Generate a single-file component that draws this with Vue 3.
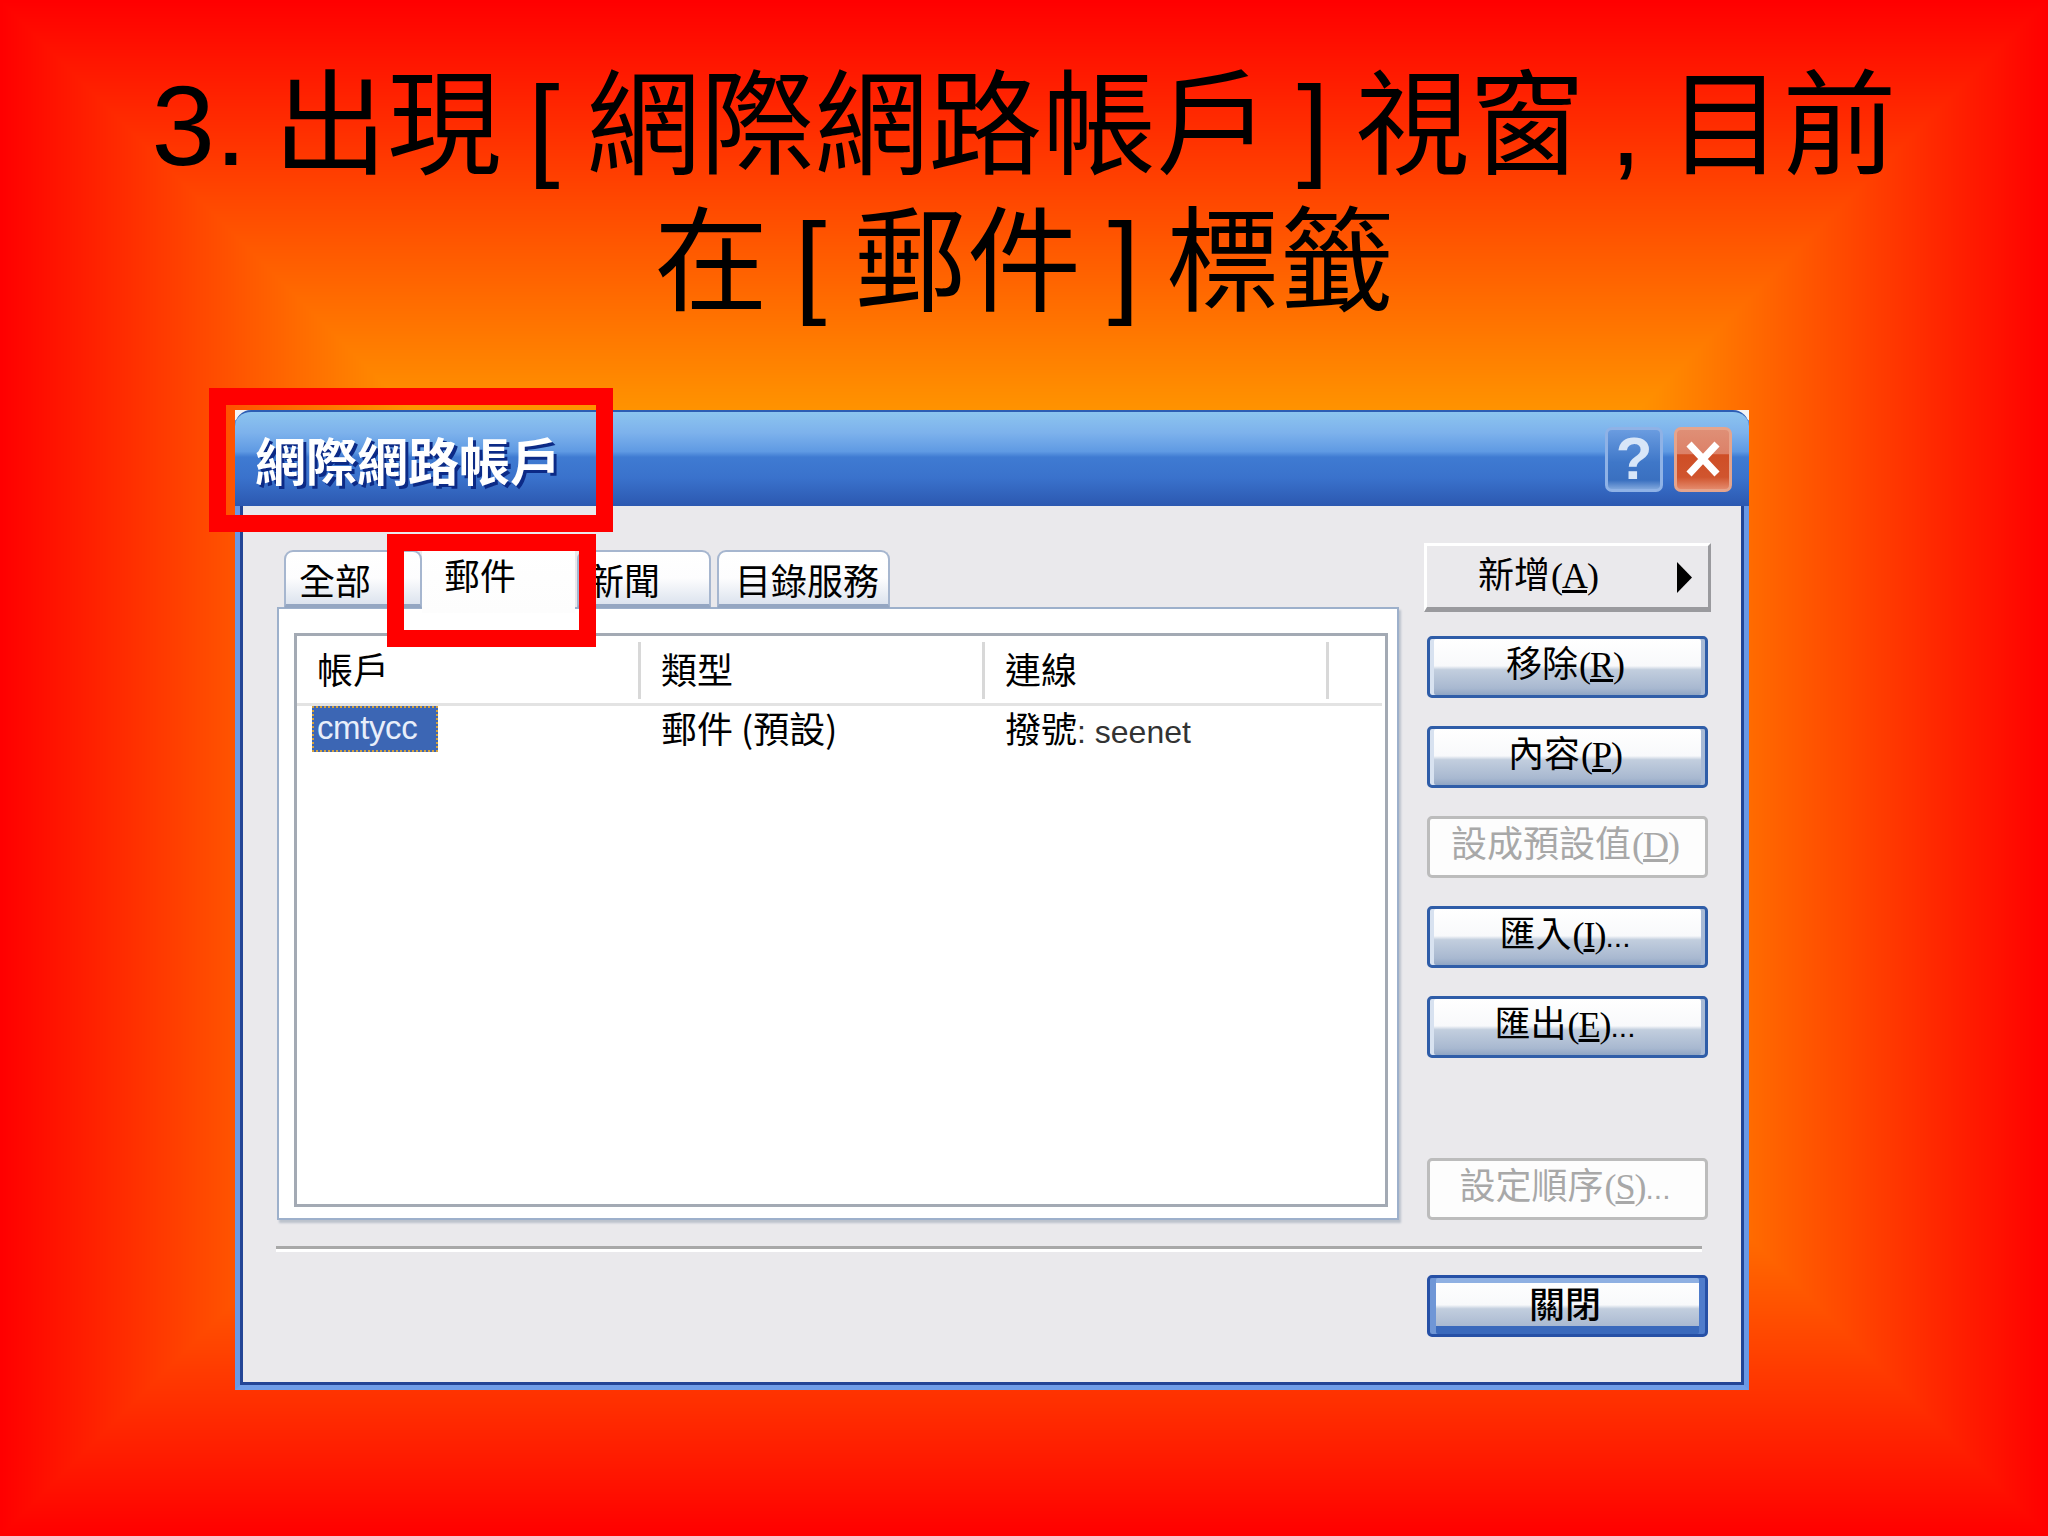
<script setup>
const levels = Array.from({ length: 256 }, (_, i) => {
  const d = i * 2.78
  return {
    x: d,
    y: d,
    w: 2048 - 2 * d,
    h: 1536 - 2 * d,
    fill: `rgb(255,${i},0)`
  }
}).filter((l) => l.h > 0)
const tabs = [
  { label: '全部', cls: 'tab-all' },
  { label: '郵件', cls: 'tab-mail' },
  { label: '新聞', cls: 'tab-news' },
  { label: '目錄服務', cls: 'tab-dir' }
]
const columns = ['帳戶', '類型', '連線']
const buttons = [
  { cjk: '移除', key: 'R', tail: '' },
  { cjk: '內容', key: 'P', tail: '' },
  { cjk: '設成預設值', key: 'D', tail: '', off: true },
  { cjk: '匯入', key: 'I', tail: '...' },
  { cjk: '匯出', key: 'E', tail: '...' }
]
</script>

<template>
  <div class="slide">
    <svg class="backdrop" width="2048" height="1536" viewBox="0 0 2048 1536" aria-hidden="true">
      <rect v-for="l in levels" :key="l.fill" :x="l.x" :y="l.y" :width="l.w" :height="l.h" :fill="l.fill" shape-rendering="crispEdges" />
    </svg>

    <h1 class="heading">
      <span class="line">3. 出現 [ 網際網路帳戶 ] 視窗 , 目前</span>
      <span class="line">在 [ 郵件 ] 標籤</span>
    </h1>

    <section class="dialog">
      <i class="notch notch-l"></i>
      <i class="notch notch-r"></i>
      <header class="titlebar">
        <span class="title-text">網際網路帳戶</span>
        <div class="title-btns">
          <span class="help">?</span>
          <span class="close">
            <svg width="34" height="36" viewBox="0 0 34 36"><path d="M3 3 L31 33 M31 3 L3 33" stroke="#fff" stroke-width="7" fill="none" /></svg>
          </span>
        </div>
      </header>

      <div class="client">
        <div class="main-row">
          <div class="left">
            <div class="tabs">
              <div v-for="t in tabs" :key="t.label" class="tab" :class="t.cls">{{ t.label }}</div>
            </div>
            <div class="panel">
              <div class="list">
                <div class="list-head">
                  <div v-for="c in columns" :key="c" class="col-head">{{ c }}</div>
                </div>
                <div class="list-row">
                  <div class="cell cell-first"><span class="selected">cmtycc</span></div>
                  <div class="cell">郵件 (預設)</div>
                  <div class="cell">撥號<span class="latin">: seenet</span></div>
                </div>
              </div>
            </div>
          </div>

          <div class="right">
            <div class="btn-new">
              <span class="btn-new-label">新增<span class="key">(<u>A</u>)</span></span>
              <svg class="arrow" width="15" height="31" viewBox="0 0 15 31"><path d="M0 0 L15 15.5 L0 31 Z" fill="#000" /></svg>
            </div>
            <div v-for="b in buttons" :key="b.key" class="btn" :class="{ off: b.off }">
              <span>{{ b.cjk }}<span class="key">(<u>{{ b.key }}</u>)</span><span class="tail">{{ b.tail }}</span></span>
            </div>
            <div class="btn off btn-order"><span>設定順序<span class="key">(<u>S</u>)</span><span class="tail">...</span></span></div>
          </div>
        </div>

        <div class="separator"></div>
        <div class="footer">
          <div class="btn btn-default"><span>關閉</span></div>
        </div>
      </div>
    </section>

    <div class="mark mark-title"></div>
    <div class="mark mark-tab"></div>
  </div>
</template>

<style scoped>
.slide {
  position: relative;
  width: 2048px;
  height: 1536px;
  overflow: hidden;
  font-family: "Liberation Sans", "Noto Sans CJK TC", sans-serif;
  color: #000;
}
.backdrop {
  position: absolute;
  left: 0;
  top: 0;
}
.heading {
  position: relative;
  margin: 0;
  padding-top: 57px;
  height: 353px;
  box-sizing: border-box;
  font-size: 114px;
  font-weight: 400;
  line-height: 137px;
  text-align: center;
  white-space: nowrap;
  word-spacing: -5px;
}
.line {
  display: block;
}
.dialog {
  position: relative;
  margin-left: 235px;
  width: 1514px;
  height: 980px;
  box-sizing: border-box;
  border-left: 5px solid #6a98e4;
  border-right: 5px solid #6a98e4;
  border-bottom: 5px solid #6f9de8;
  background: #eae9ec;
  box-shadow: inset 0 -3px 0 #234596, inset 3px 0 0 #234596, inset -3px 0 0 #234596;
  margin-top: 57px;
}
.notch {
  position: absolute;
  top: 0;
  width: 10px;
  height: 10px;
  background: #f4f4f4;
}
.notch-l {
  left: -5px;
}
.notch-r {
  right: -5px;
}
.titlebar {
  position: relative;
  margin: 0 -5px;
  height: 96px;
  box-sizing: border-box;
  padding: 0 17px 0 20px;
  display: flex;
  align-items: center;
  justify-content: space-between;
  border-radius: 16px 16px 0 0;
  border-top: 2px solid #2c5db4;
  background: linear-gradient(#8cc4ef 0%, #7db2ec 22%, #5f9ae3 42%, #3f7bd2 48%, #3a72cc 70%, #2c58b0 100%);
}
.title-text {
  font-family: "Noto Sans CJK TC", sans-serif;
  font-size: 51px;
  font-weight: 700;
  line-height: 60px;
  color: #fff;
  text-shadow: 3px 3px 0 #0c2a86;
}
.title-btns {
  display: flex;
  gap: 11px;
}
.help,
.close {
  width: 58px;
  height: 65px;
  box-sizing: border-box;
  border-radius: 7px;
  display: flex;
  align-items: center;
  justify-content: center;
}
.help {
  border: 3px solid #8fb2e6;
  background: linear-gradient(#6a9ce0, #3f77c8 55%, #3a70c0 85%, #7fa6dc);
  color: #d8e6f8;
  font-size: 60px;
  line-height: 1;
  font-weight: 700;
}
.close {
  border: 3px solid #e5a48c;
  background: linear-gradient(#df8f76 0%, #dc8168 40%, #cf4e26 42%, #d0552e 80%, #e48a6c 100%);
}
.client {
  display: flex;
  flex-direction: column;
  height: 879px;
  padding-right: 36px;
  box-sizing: border-box;
}
.main-row {
  display: flex;
  padding-top: 37px;
  height: 715px;
  box-sizing: border-box;
}
.left {
  margin: 7px 0 0 37px;
  width: 1122px;
}
.tabs {
  position: relative;
  z-index: 1;
  height: 58px;
  margin-bottom: -1px;
  display: flex;
  align-items: flex-end;
  font-family: "Noto Sans CJK TC", sans-serif;
  font-size: 36px;
}
.tab {
  height: 58px;
  box-sizing: border-box;
  border: 2px solid #a6b6cf;
  border-bottom: 4px solid #94a6c2;
  border-radius: 9px 9px 0 0;
  background: linear-gradient(#fff 0%, #fdfdfe 50%, #dce3ee 100%);
  line-height: 54px;
  text-align: left;
}
.tab-all {
  margin-left: 7px;
  width: 138px;
  padding-left: 13px;
}
.tab-mail {
  width: 153px;
  height: 70px;
  margin-bottom: -5px;
  border: 0;
  background: linear-gradient(#fff 0%, #fdfdfd 100%);
  padding-left: 22px;
  line-height: 62px;
}
.tab-news {
  margin-left: 2px;
  width: 134px;
  padding-left: 9px;
}
.tab-dir {
  margin-left: 6px;
  width: 173px;
  padding-left: 16px;
}
.panel {
  height: 613px;
  box-sizing: border-box;
  background: #fff;
  border: 2px solid #9db0cb;
  box-shadow: 2px 3px 2px #bcc2cc;
  padding: 24px 9px 11px 15px;
}
.list {
  height: 100%;
  box-sizing: border-box;
  border: 3px solid #a3aab4;
  background: #fff;
  padding-left: 0;
}
.list-head {
  display: flex;
  height: 67px;
  margin-right: 3px;
  border-bottom: 3px solid #e3e3e3;
  box-sizing: content-box;
  font-family: "Noto Sans CJK TC", sans-serif;
  font-size: 36px;
}
.col-head {
  width: 344px;
  height: 57px;
  margin-top: 6px;
  box-sizing: border-box;
  border-right: 3px solid #d8d8d8;
  padding-left: 20px;
  line-height: 53px;
}
.col-head:first-child {
  padding-left: 20px;
}
.list-row {
  display: flex;
  font-family: "Noto Sans CJK TC", sans-serif;
  font-size: 36px;
  line-height: 40px;
  padding-top: 1px;
}
.cell {
  width: 344px;
  box-sizing: border-box;
  padding-left: 20px;
  white-space: nowrap;
}
.cell-first {
  padding-left: 15px;
}
.selected {
  display: block;
  width: 126px;
  height: 46px;
  box-sizing: border-box;
  margin-top: -1px;
  padding-left: 3px;
  border: 2px dotted #d6a23c;
  background: #3c66b4;
  color: #e8eefa;
  font-family: "Liberation Sans", sans-serif;
  font-size: 33px;
  line-height: 40px;
  letter-spacing: -0.4px;
}
.latin {
  font-family: "Liberation Sans", sans-serif;
  font-size: 32px;
  color: #333;
}
.right {
  margin-left: 25px;
  width: 284px;
  display: flex;
  flex-direction: column;
  align-items: flex-end;
  font-family: "Noto Sans CJK TC", sans-serif;
  font-size: 36px;
}
.btn-new {
  position: relative;
  width: 287px;
  height: 69px;
  box-sizing: border-box;
  margin-right: -3px;
  margin-bottom: 24px;
  padding-bottom: 6px;
  border-top: 3px solid #fff;
  border-left: 3px solid #fff;
  border-right: 3px solid #9a9a9e;
  border-bottom: 5px solid #9a9a9e;
  display: flex;
  align-items: center;
  padding-left: 51px;
}
.btn-new-label {
  line-height: 50px;
}
.arrow {
  position: absolute;
  left: 250px;
  top: 16px;
}
.btn {
  width: 281px;
  height: 62px;
  flex: none;
  box-sizing: border-box;
  margin-bottom: 28px;
  padding: 0 5px 6px 0;
  border: 3px solid #2f5da8;
  border-radius: 5px;
  background: linear-gradient(#fff 0%, #f8f9fb 48%, #c2cede 55%, #a8b8d0 88%, #8fa5c4 100%);
  box-shadow: inset 4px 0 0 #d8e2f0, inset -4px 0 0 #a9bbd6;
  display: flex;
  align-items: center;
  justify-content: center;
  line-height: 50px;
  white-space: nowrap;
}
.btn.off {
  border-color: #bcbcbc;
  background: #fdfdfd;
  box-shadow: none;
  color: #a8a8a8;
}
.btn-order {
  margin-top: 72px;
  margin-bottom: 0;
}
.key {
  font-family: "Liberation Serif", serif;
  font-size: 36px;
  letter-spacing: -1px;
  margin-left: 1px;
}
.tail {
  font-family: "Liberation Sans", sans-serif;
  font-size: 30px;
}
.separator {
  margin: 25px 6px 0 36px;
  height: 3px;
  background: #a8a8a8;
  box-shadow: 0 3px 0 #fff;
}
.footer {
  display: flex;
  justify-content: flex-end;
  margin-top: 26px;
  font-family: "Noto Sans CJK TC", sans-serif;
  font-size: 36px;
}
.btn-default {
  margin-bottom: 0;
  padding-bottom: 8px;
  border: 3px solid #2650a6;
  box-shadow: inset 6px 0 0 #6f96d6, inset -6px 0 0 #4f7ccb, inset 0 5px 0 #8fb0e2, inset 0 -8px 0 #3a69bc;
  font-weight: 500;
}
.mark {
  position: absolute;
  z-index: 2;
  box-sizing: border-box;
  border: 17px solid #ff0000;
}
.mark-title {
  left: 209px;
  top: 388px;
  width: 404px;
  height: 144px;
}
.mark-tab {
  left: 387px;
  top: 534px;
  width: 209px;
  height: 113px;
}
</style>
